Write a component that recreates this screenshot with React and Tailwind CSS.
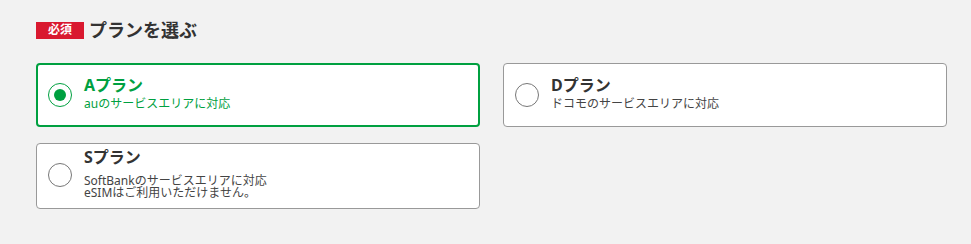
import React from "react";

function Radio({ checked }) {
  return checked ? (
    <span className="flex h-[24px] w-[24px] shrink-0 items-center justify-center rounded-full border-[1.5px] border-[#00a040] bg-white">
      <span className="block h-[12px] w-[12px] rounded-full bg-[#00a040]" />
    </span>
  ) : (
    <span className="block h-[24px] w-[24px] shrink-0 rounded-full border-[1.5px] border-[#777] bg-white" />
  );
}

export default function App() {
  return (
    <div className="min-h-screen bg-[#f2f2f2] pl-[36px] pr-[24px] pt-[21px] font-['Noto_Sans','Noto_Sans_CJK_JP',sans-serif] text-[#333]">
      <div className="flex items-center">
        <span className="flex h-[17px] w-[48px] items-center justify-center bg-[#d9192f] text-[12px] font-bold leading-none text-white">
          必須
        </span>
        <h2 className="ml-[5px] text-[18px] font-bold leading-[18px] text-[#333]">プランを選ぶ</h2>
      </div>

      <div className="mt-[24px] grid grid-cols-2 gap-x-[23px] gap-y-[16px]">
        <label className="flex min-h-[64px] items-start rounded-[4px] border-2 border-[#00a040] bg-white pl-[10px]">
          <span className="block self-center">
            <Radio checked />
          </span>
          <div className="ml-[12px] pt-[10px] text-[#00a040]">
            <div className="text-[16px] font-bold leading-[20px]">Aプラン</div>
            <div className="mt-[3px] text-[12px] leading-[12px]">auのサービスエリアに対応</div>
          </div>
        </label>

        <label className="flex min-h-[64px] items-start rounded-[4px] border border-[#999] bg-white pl-[11px]">
          <span className="block self-center">
            <Radio />
          </span>
          <div className="ml-[12px] pt-[11px]">
            <div className="text-[16px] font-bold leading-[20px] text-[#333]">Dプラン</div>
            <div className="mt-[3px] text-[12px] leading-[12px] text-[#444]">ドコモのサービスエリアに対応</div>
          </div>
        </label>

        <label className="flex items-start rounded-[4px] border border-[#999] bg-white pl-[11px] pb-[9px] pt-[3px]">
          <span className="mt-[4px] block self-center">
            <Radio />
          </span>
          <div className="ml-[12px]">
            <div className="text-[16px] font-bold leading-[20px] text-[#333]">Sプラン</div>
            <div className="mt-[8px] text-[12px] leading-[12px] text-[#444]">
              SoftBankのサービスエリアに対応
              <br />
              eSIMはご利用いただけません。
            </div>
          </div>
        </label>
      </div>
    </div>
  );
}
